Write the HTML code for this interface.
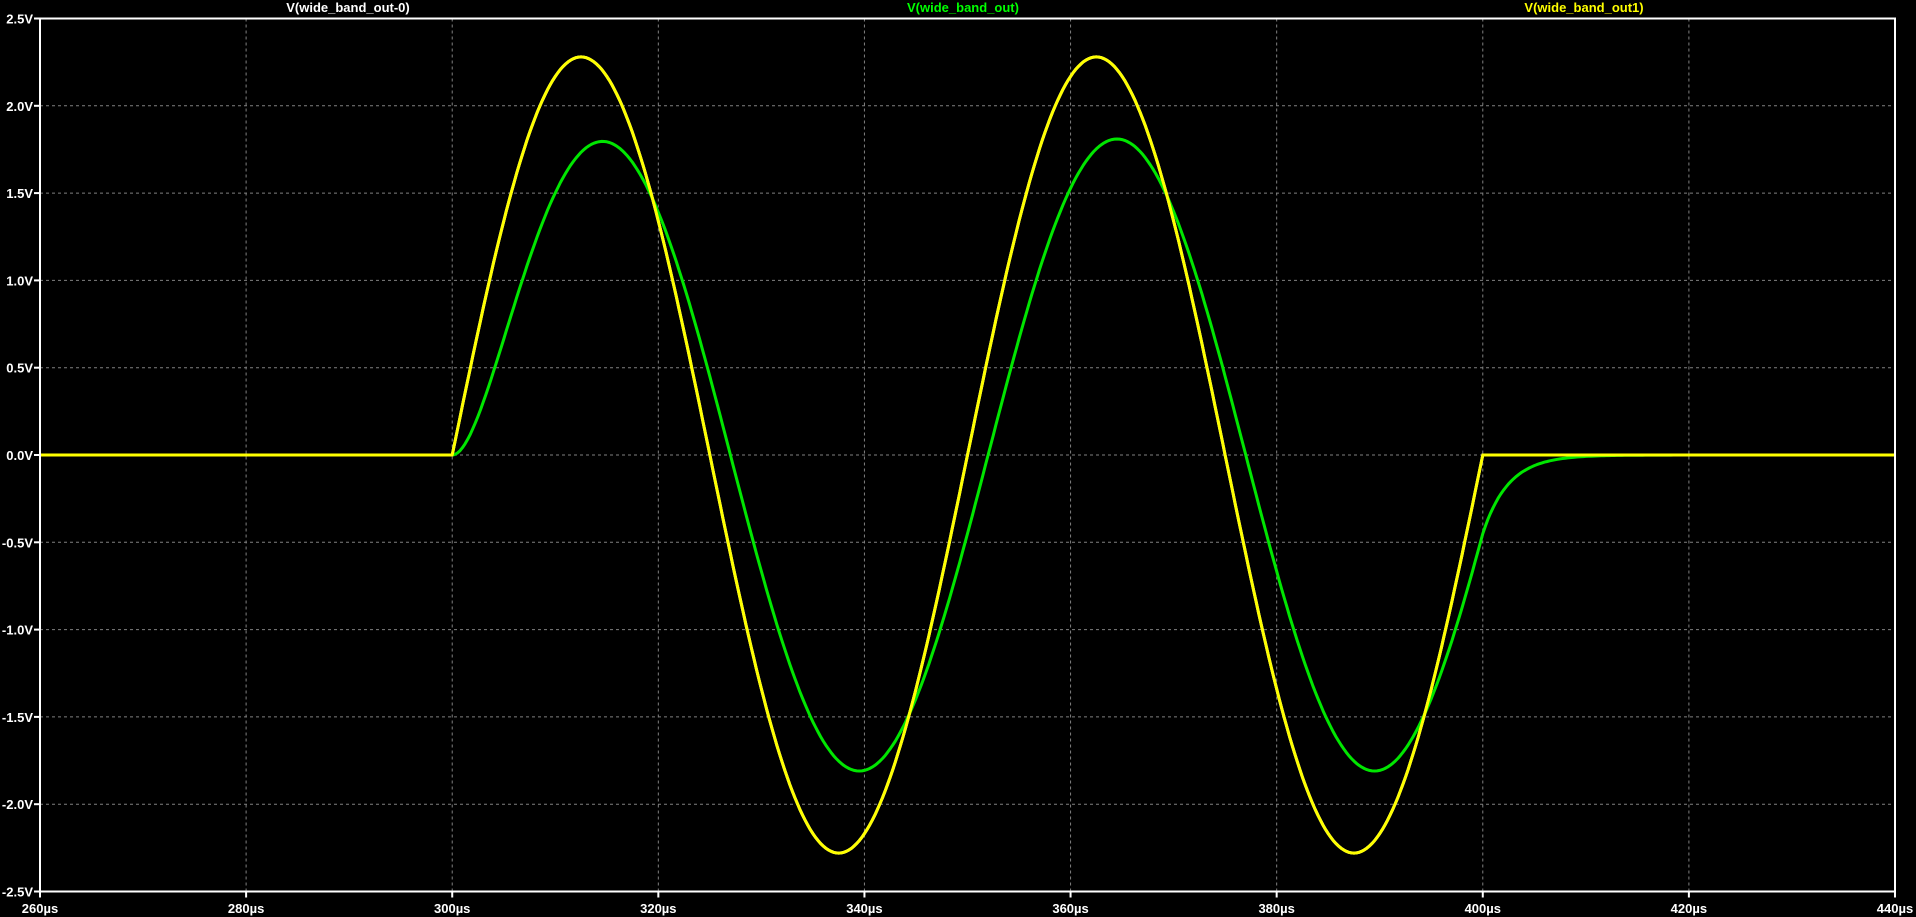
<!DOCTYPE html>
<html><head><meta charset="utf-8"><style>
html,body{margin:0;padding:0;background:#000;width:1916px;height:917px;overflow:hidden}
svg{display:block}
text{font-family:"Liberation Sans",sans-serif;font-weight:bold;font-size:13px}
</style></head><body>
<svg id="s" width="1916" height="917" xmlns="http://www.w3.org/2000/svg">
<g id="grid" stroke="#808080" stroke-width="1" stroke-dasharray="3,3"></g>
<g id="labels" fill="#fff"></g>
<text x="348" y="12" fill="#fff" text-anchor="middle">V(wide_band_out-0)</text>
<text x="963" y="12" fill="#00ff00" text-anchor="middle">V(wide_band_out)</text>
<text x="1584" y="12" fill="#ffff00" text-anchor="middle">V(wide_band_out1)</text>
<path id="w" fill="none" stroke="#fff" stroke-width="3"/>
<path id="g" fill="none" stroke="#00e600" stroke-width="3" stroke-linejoin="round"/>
<path id="y" fill="none" stroke="#ffff00" stroke-width="3" stroke-linejoin="round"/>
<rect x="40" y="18.5" width="1855" height="873" fill="none" stroke="#fff" stroke-width="2"/>
</svg>
<script>
var L=40,R=1895,T=18.5,B=891.5;
function X(t){return L+(t-260)*(R-L)/180}
function Y(v){return T+(2.5-v)*(B-T)/5}
var ns="http://www.w3.org/2000/svg",grid=document.getElementById('grid'),lab=document.getElementById('labels');
function el(p,tag,a,txt){var e=document.createElementNS(ns,tag);for(var k in a)e.setAttribute(k,a[k]);if(txt)e.textContent=txt;p.appendChild(e);return e}
for(var i=0;i<=9;i++){var x=X(260+20*i);
 if(i>0&&i<9)el(grid,'line',{x1:x,y1:T,x2:x,y2:B});
 el(lab,'rect',{x:x-1,y:B,width:2,height:6});
 el(lab,'text',{x:x,y:913,'text-anchor':'middle'},(260+20*i)+'µs');}
for(var j=0;j<=10;j++){var v=2.5-0.5*j,y=Y(v);
 if(j>0&&j<10)el(grid,'line',{x1:L,y1:y,x2:R,y2:y});
 el(lab,'rect',{x:L-6,y:y-1,width:6,height:2});
 el(lab,'text',{x:L-7,y:y+5,'text-anchor':'end'},v.toFixed(1)+'V');}
var w=2*Math.PI/50,yp='',gp='',tau=2.5,tau0=3.5,lag=2,A=1.81;
var g400=A*Math.sin(w*(100-lag));
for(var t=260;t<=440;t+=0.25){
 var yv=0,gv=0;
 if(t>300&&t<400){yv=2.28*Math.sin(w*(t-300));
  var ss=A*Math.sin(w*(t-300-lag)),s0=A*Math.sin(-w*lag);
  var u=(t-300)/tau0;
  gv=ss-(s0*(1+u)+A*w*Math.cos(w*lag)*(t-300))*Math.exp(-u);}
 else if(t>=400){gv=g400*Math.exp(-(t-400)/tau);}
 yp+=(yp?'L':'M')+X(t).toFixed(1)+' '+Y(yv).toFixed(1);
 gp+=(gp?'L':'M')+X(t).toFixed(1)+' '+Y(gv).toFixed(1);}
document.getElementById('y').setAttribute('d',yp);
document.getElementById('w').setAttribute('d',yp);
document.getElementById('g').setAttribute('d',gp);
</script>
</body></html>
